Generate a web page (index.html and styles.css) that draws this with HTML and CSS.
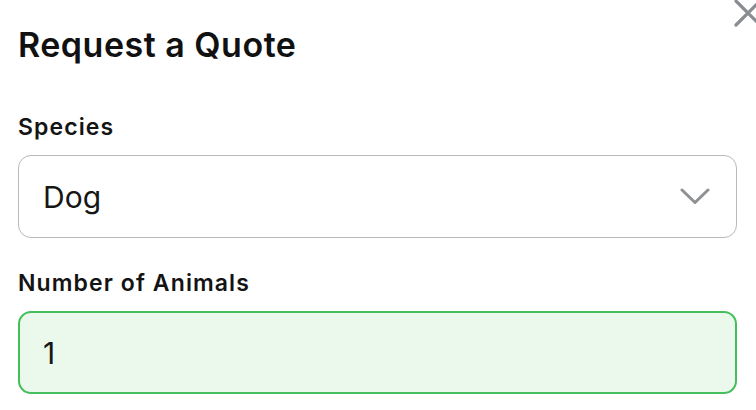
FILE: index.html
```html
<!DOCTYPE html>
<html lang="en">
<head>
    <meta charset="UTF-8">
    <meta name="viewport" content="width=device-width, initial-scale=1.0">
    <title>Request a Quote</title>
    <link rel="stylesheet" href="styles.css">
</head>
<body>
    <div class="modal">
        <button class="close" aria-label="Close">
            <svg width="28" height="28" viewBox="0 0 28 28">
                <path d="M2 2 L26 26 M26 2 L2 26" stroke="#898c90" stroke-width="3.2" stroke-linecap="round" fill="none"/>
            </svg>
        </button>

        <h1>Request a Quote</h1>

        <div class="field">
            <label for="species">Species</label>
            <div class="select-wrap">
                <select id="species">
                    <option>Dog</option>
                    <option>Cat</option>
                    <option>Horse</option>
                </select>
                <svg class="chevron" width="30" height="17" viewBox="0 0 30 17">
                    <path d="M2 2 L15 14.5 L28 2" stroke="#8e9194" stroke-width="3" stroke-linecap="round" stroke-linejoin="round" fill="none"/>
                </svg>
            </div>
        </div>

        <div class="field">
            <label for="count">Number of Animals</label>
            <input type="text" id="count" class="valid" value="1">
        </div>
    </div>
</body>
</html>
```

FILE: styles.css
```css
body {
    margin: 0;
    padding: 0;
    background: #ffffff;
    color: #111111;
    font-family: 'Inter', 'Liberation Sans', sans-serif;
    overflow: hidden;
}

.modal {
    position: relative;
    padding: 25px 19px 0 18px;
}

.close {
    position: absolute;
    top: -1px;
    right: -6px;
    padding: 0;
    border: none;
    background: none;
    cursor: pointer;
}

.close svg {
    display: block;
}

h1 {
    margin: 0 0 48px;
    font-size: 34px;
    line-height: 40px;
    font-weight: 600;
    letter-spacing: 0.5px;
}

.field {
    display: flex;
    flex-direction: column;
}

.field + .field {
    margin-top: 31px;
}

label {
    margin-bottom: 14px;
    font-size: 23px;
    line-height: 28px;
    font-weight: 600;
    letter-spacing: 1.1px;
    color: #141414;
}

.select-wrap {
    position: relative;
}

select,
input[type="text"] {
    box-sizing: border-box;
    width: 100%;
    height: 83px;
    margin: 0;
    padding: 0 24px;
    font-family: inherit;
    font-size: 30px;
    color: #161616;
    border-radius: 13px;
    outline: none;
}

select {
    appearance: none;
    -webkit-appearance: none;
    background: #ffffff;
    border: 1px solid #b7b9bc;
}

.chevron {
    position: absolute;
    right: 27px;
    top: 33px;
    pointer-events: none;
}

input[type="text"] {
    padding-left: 23px;
    background: #ebf9ed;
    border: 2px solid #45bf5b;
}
```
